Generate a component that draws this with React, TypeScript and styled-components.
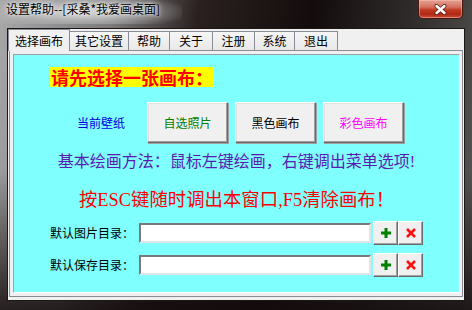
import React from 'react';
import styled, {createGlobalStyle} from 'styled-components';

const GlobalStyle = createGlobalStyle`
  html, body {
    margin: 0;
    padding: 0;
    background: #000;
  }
  body {
    font-family: "Noto Sans CJK SC", sans-serif;
  }
`;

const cjk = `"Noto Sans CJK SC", sans-serif`;
const serif = `"Liberation Serif", "Noto Sans CJK SC", serif`;

const Win = {
  Frame: styled.div`
    width: 472px;
    height: 310px;
    box-sizing: border-box;
    display: flex;
    flex-direction: column;
    padding: 0 7px 9px 7px;
    background:
      linear-gradient(to bottom, rgba(0,0,0,0) 0%, rgba(0,0,0,0) 55%, rgba(20,12,12,.85) 100%),
      linear-gradient(100deg, #a8a8a8 0%, #7c7a7a 22%, #2a2020 38%, #140c0c 60%, #2e2a2a 78%, #5e5c5c 100%);
  `,
  TitleBar: styled.div`
    height: 28px;
    display: flex;
    align-items: flex-start;
    margin: 0 -7px;
    padding-right: 9px;
  `,
  Title: styled.div`
    height: 24px;
    line-height: 24px;
    padding: 0 22px 0 6px;
    font: 12px ${cjk};
    color: #000;
    text-shadow: 0 0 6px #fff, 0 0 3px #eee;
    background: radial-gradient(ellipse 60% 80% at 45% 50%, rgba(225,225,225,.9) 0%, rgba(190,190,190,.55) 55%, rgba(160,160,160,0) 100%);
  `,
  Close: styled.div`
    margin-left: auto;
    width: 45px;
    height: 19px;
    box-sizing: border-box;
    border: 1px solid #4a1810;
    border-top: none;
    border-radius: 0 0 5px 5px;
    background: linear-gradient(to bottom, #e6a294 0%, #d2705c 40%, #c03a22 55%, #b22a14 80%, #c8503a 100%);
    box-shadow: inset 0 0 0 1px rgba(255,200,190,.45);
    display: flex;
    align-items: center;
    justify-content: center;
  `,
  Client: styled.div`
    flex: 1;
    display: flex;
    flex-direction: column;
    background: #f0f0f0;
    border: 1px solid #1c1616;
  `,
};

const Tabs = {
  Strip: styled.div`
    height: 21px;
    display: flex;
    align-items: flex-end;
    position: relative;
    z-index: 1;
  `,
  Tab: styled.div<{$active?: boolean; $w: number}>`
    width: ${p => p.$w}px;
    height: ${p => (p.$active ? 22 : 19)}px;
    margin-bottom: ${p => (p.$active ? -1 : 0)}px;
    margin-left: -1px;
    box-sizing: border-box;
    border: 1px solid #898c95;
    border-bottom: none;
    background: ${p => (p.$active ? '#f0f0f0' : 'linear-gradient(#f6f6f6, #e8e8e8)')};
    display: flex;
    align-items: center;
    justify-content: center;
    font: 12px/14px ${cjk};
    color: #000;
    &:first-child {
      margin-left: 0;
    }
  `,
  Panel: styled.div`
    flex: 1;
    display: flex;
    margin: 0 1px 3px 1px;
    border: 1px solid #898c95;
    padding: 3px 2px 3px 3px;
  `,
};

const Canvas = {
  Box: styled.div`
    flex: 1;
    display: flex;
    flex-direction: column;
    background: #80ffff;
    border: 1px solid;
    border-color: #a0a0a0 #ffffff #ffffff #a0a0a0;
    padding-top: 12px;
  `,
  Heading: styled.div`
    align-self: flex-start;
    margin-left: 36px;
    height: 20px;
    line-height: 20px;
    padding: 0 1px;
    background: #ffff00;
    color: #ff0000;
    font: bold 18px/20px ${cjk};
  `,
  ChoiceRow: styled.div`
    margin-top: 15px;
    height: 41px;
    display: flex;
    align-items: center;
    padding-left: 63px;
  `,
  Current: styled.div`
    width: 70px;
    color: #0000e0;
    font: 12px/14px ${cjk};
  `,
  Choice: styled.div<{$color: string}>`
    width: 81px;
    height: 41px;
    margin-right: 7px;
    box-sizing: border-box;
    background: #f0f0f0;
    border: 1px solid;
    border-color: #ffffff #6a6a6a #6a6a6a #ffffff;
    box-shadow: 1px 1px 0 #a0a0a0, inset -1px -1px 0 #a0a0a0, inset 1px 1px 0 #e3e3e3;
    display: flex;
    align-items: center;
    justify-content: center;
    color: ${p => p.$color};
    font: 12px/14px ${cjk};
  `,
  Line: styled.div<{$color: string; $size: number; $top: number; $lh: number}>`
    margin-top: ${p => p.$top}px;
    text-align: center;
    color: ${p => p.$color};
    font-size: ${p => p.$size}px;
    line-height: ${p => p.$lh}px;
    font-family: ${serif};
    white-space: nowrap;
  `,
  PathRow: styled.div<{$top: number}>`
    margin-top: ${p => p.$top}px;
    height: 24px;
    display: flex;
    align-items: center;
    padding-left: 36px;
  `,
  PathLabel: styled.div`
    width: 89px;
    color: #000;
    font: 12px/14px ${cjk};
  `,
  PathInput: styled.div`
    width: 232px;
    height: 20px;
    box-sizing: border-box;
    background: #fff;
    border: 2px solid;
    border-color: #7a7a7a #e4e4e4 #e4e4e4 #7a7a7a;
    margin-right: 2px;
  `,
  SmallBtn: styled.div`
    width: 25px;
    height: 24px;
    box-sizing: border-box;
    background: #f0f0f0;
    border: 1px solid;
    border-color: #ffffff #6a6a6a #6a6a6a #ffffff;
    box-shadow: inset -1px -1px 0 #a0a0a0;
    display: flex;
    align-items: center;
    justify-content: center;
  `,
};

const tabs: [string, number][] = [
  ['选择画布', 62],
  ['其它设置', 60],
  ['帮助', 42],
  ['关于', 44],
  ['注册', 43],
  ['系统', 41],
  ['退出', 44],
];

const PlusIcon = () => (
  <svg width="12" height="12" viewBox="0 0 12 12">
    <path d="M6 1v10M1 6h10" stroke="#008000" strokeWidth="3" />
  </svg>
);

const CrossIcon = () => (
  <svg width="12" height="12" viewBox="0 0 12 12">
    <path d="M2 2l8 8M10 2l-8 8" stroke="#ff1010" strokeWidth="2.6" />
  </svg>
);

const CloseGlyph = () => (
  <svg width="13" height="11" viewBox="0 0 13 11">
    <path d="M2.5 2l8 7M10.5 2l-8 7" stroke="#5a2018" strokeWidth="4" strokeLinecap="round" />
    <path d="M2.5 2l8 7M10.5 2l-8 7" stroke="#fff" strokeWidth="2.4" strokeLinecap="round" />
  </svg>
);

const PathField: React.FC<{label: string; top: number}> = ({label, top}) => (
  <Canvas.PathRow $top={top}>
    <Canvas.PathLabel>{label}</Canvas.PathLabel>
    <Canvas.PathInput />
    <Canvas.SmallBtn><PlusIcon /></Canvas.SmallBtn>
    <Canvas.SmallBtn><CrossIcon /></Canvas.SmallBtn>
  </Canvas.PathRow>
);

const App: React.FC = () => {
  return (
    <>
      <GlobalStyle />
      <Win.Frame>
        <Win.TitleBar>
          <Win.Title>设置帮助--[采桑*我爱画桌面]</Win.Title>
          <Win.Close><CloseGlyph /></Win.Close>
        </Win.TitleBar>
        <Win.Client>
          <Tabs.Strip>
            {tabs.map(([name, w], i) => (
              <Tabs.Tab key={name} $w={w} $active={i === 0}>{name}</Tabs.Tab>
            ))}
          </Tabs.Strip>
          <Tabs.Panel>
            <Canvas.Box>
              <Canvas.Heading>请先选择一张画布：</Canvas.Heading>
              <Canvas.ChoiceRow>
                <Canvas.Current>当前壁纸</Canvas.Current>
                <Canvas.Choice $color="#008000">自选照片</Canvas.Choice>
                <Canvas.Choice $color="#000000">黑色画布</Canvas.Choice>
                <Canvas.Choice $color="#ff00ff">彩色画布</Canvas.Choice>
              </Canvas.ChoiceRow>
              <Canvas.Line $color="#5a1cb0" $size={16} $top={9} $lh={20}>
                基本绘画方法：鼠标左键绘画，右键调出菜单选项!
              </Canvas.Line>
              <Canvas.Line $color="#ff0000" $size={18.4} $top={17} $lh={22}>
                按ESC键随时调出本窗口,F5清除画布！
              </Canvas.Line>
              <PathField label="默认图片目录：" top={10} />
              <PathField label="默认保存目录：" top={8} />
            </Canvas.Box>
          </Tabs.Panel>
        </Win.Client>
      </Win.Frame>
    </>
  );
};

export default App;
